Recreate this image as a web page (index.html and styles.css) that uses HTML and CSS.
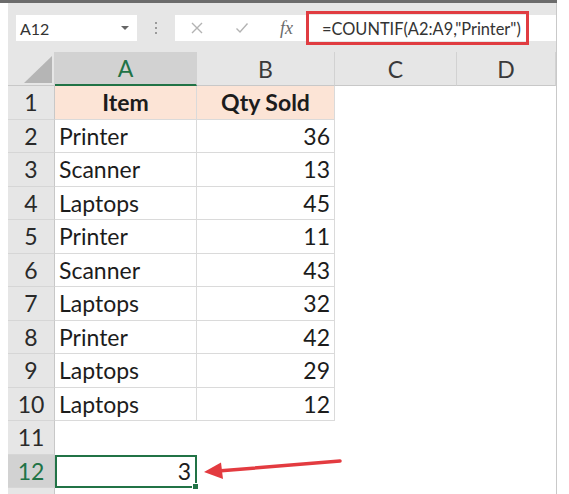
FILE: index.html
```html
<!DOCTYPE html>
<html lang="en">

<head>
    <meta charset="UTF-8">
    <meta name="viewport" content="width=device-width, initial-scale=1.0">
    <title>COUNTIF example</title>
    <link rel="stylesheet" href="styles.css">
</head>

<body>

    <div class="topbar"></div>

    <div class="window">
        <!-- name box + formula bar -->
        <div class="toolbar">
            <div class="namebox">
                <span>A12</span>
                <span class="caret"></span>
            </div>
            <div class="grip"><i></i><i></i><i></i></div>
            <div class="fbar">
                <svg class="btn" width="14" height="14" viewBox="0 0 14 14">
                    <path d="M2 2 L12 12 M12 2 L2 12" stroke="#b3b3b3" stroke-width="1.4" fill="none" />
                </svg>
                <svg class="btn check" width="14" height="14" viewBox="0 0 14 14">
                    <path d="M1.5 7.5 L5 11 L12.5 2.5" stroke="#b3b3b3" stroke-width="1.4" fill="none" />
                </svg>
                <span class="fx">fx</span>
                <span class="formula">=COUNTIF(A2:A9,"Printer")</span>
            </div>
        </div>

        <!-- worksheet -->
        <div class="sheet">
            <div class="ch corner"></div>
            <div class="ch on">A</div>
            <div class="ch">B</div>
            <div class="ch">C</div>
            <div class="ch">D</div>

            <div class="rh">1</div>
            <div class="c g h">Item</div>
            <div class="c g h">Qty Sold</div>
            <div class="c"></div>
            <div class="c"></div>

            <div class="rh">2</div>
            <div class="c g">Printer</div>
            <div class="c g n">36</div>
            <div class="c"></div>
            <div class="c"></div>

            <div class="rh">3</div>
            <div class="c g">Scanner</div>
            <div class="c g n">13</div>
            <div class="c"></div>
            <div class="c"></div>

            <div class="rh">4</div>
            <div class="c g">Laptops</div>
            <div class="c g n">45</div>
            <div class="c"></div>
            <div class="c"></div>

            <div class="rh">5</div>
            <div class="c g">Printer</div>
            <div class="c g n">11</div>
            <div class="c"></div>
            <div class="c"></div>

            <div class="rh">6</div>
            <div class="c g">Scanner</div>
            <div class="c g n">43</div>
            <div class="c"></div>
            <div class="c"></div>

            <div class="rh">7</div>
            <div class="c g">Laptops</div>
            <div class="c g n">32</div>
            <div class="c"></div>
            <div class="c"></div>

            <div class="rh">8</div>
            <div class="c g">Printer</div>
            <div class="c g n">42</div>
            <div class="c"></div>
            <div class="c"></div>

            <div class="rh">9</div>
            <div class="c g">Laptops</div>
            <div class="c g n">29</div>
            <div class="c"></div>
            <div class="c"></div>

            <div class="rh">10</div>
            <div class="c g">Laptops</div>
            <div class="c g n">12</div>
            <div class="c"></div>
            <div class="c"></div>

            <div class="rh">11</div>
            <div class="c"></div>
            <div class="c"></div>
            <div class="c"></div>
            <div class="c"></div>

            <div class="rh on">12</div>
            <div class="c n sel">3</div>
            <div class="c"></div>
            <div class="c"></div>
            <div class="c"></div>

            <!-- next row, only its top edge shows -->
            <div class="rh"></div>
            <div class="c"></div>
            <div class="c"></div>
            <div class="c"></div>
            <div class="c"></div>
        </div>
    </div>

    <!-- annotation arrow pointing at the result -->
    <svg class="arrow" width="569" height="494" viewBox="0 0 569 494">
        <line x1="340" y1="461" x2="218" y2="471" stroke="#e33b40" stroke-width="3.5" stroke-linecap="round" />
        <polygon points="204,472 221,462.5 223,479" fill="#e33b40" />
    </svg>

</body>

</html>
```

FILE: styles.css
```css
body {
    margin: 0;
    background-color: #fff;
    font-family: 'Lato', 'Liberation Sans', sans-serif;
    position: relative;
    width: 569px;
    height: 494px;
    overflow: hidden;
    color: #1c1c1c;
}

.topbar {
    width: 557px;
    height: 3px;
    background-color: #6c6c6c;
}

.window {
    margin-left: 8px;
    width: 548px;
    border-right: 1px solid #c9c9c9;
}

/* formula bar */

.toolbar {
    display: flex;
    height: 49px;
    padding-top: 12px;
    padding-left: 8px;
    box-sizing: border-box;
    background-color: #e6e6e6;
}

.namebox {
    width: 121px;
    height: 26px;
    background-color: #fff;
    display: flex;
    align-items: center;
    justify-content: space-between;
    padding: 0 8px 0 4px;
    box-sizing: border-box;
    font-size: 16px;
    color: #333;
}

.caret {
    border-left: 4px solid transparent;
    border-right: 4px solid transparent;
    border-top: 4px solid #666;
}

.grip {
    width: 38px;
    height: 26px;
    display: flex;
    flex-direction: column;
    align-items: center;
    justify-content: center;
    gap: 3px;
}

.grip i {
    width: 2px;
    height: 2px;
    background-color: #9a9a9a;
}

.fbar {
    flex: 1;
    height: 26px;
    background-color: #fff;
    display: flex;
    align-items: center;
}

.btn {
    margin-left: 15px;
}

.check {
    margin-left: 31px;
}

.fx {
    margin-left: 31px;
    font-family: 'Liberation Serif', serif;
    font-style: italic;
    font-size: 18px;
    color: #6a6a6a;
}

.formula {
    margin-left: 13px;
    width: 223px;
    height: 34px;
    box-sizing: border-box;
    border: 3px solid #e03c41;
    display: flex;
    align-items: center;
    padding-left: 13px;
    font-size: 16.4px;
    color: #333;
}

/* grid */

.sheet {
    display: grid;
    grid-template-columns: 47px 142px 138px 122px 99px;
    grid-template-rows: 34px repeat(13, 33.5px);
}

.ch {
    background-color: #e6e6e6;
    border-right: 1px solid #d2d2d2;
    border-bottom: 1px solid #c8c8c8;
    box-sizing: border-box;
    display: flex;
    align-items: center;
    justify-content: center;
    font-size: 23px;
    color: #3a3a3a;
}

.ch.on {
    background-color: #d2d2d2;
    color: #217346;
    border-bottom: 2px solid #217346;
}

.corner {
    position: relative;
}

.corner::after {
    content: '';
    position: absolute;
    right: 2px;
    bottom: 2px;
    width: 28px;
    height: 27px;
    background-color: #b5b5b5;
    clip-path: polygon(100% 0, 100% 100%, 0 100%);
}

.rh {
    background-color: #e6e6e6;
    border-right: 1px solid #c8c8c8;
    border-bottom: 1px solid #d6d6d6;
    box-sizing: border-box;
    display: flex;
    align-items: center;
    justify-content: center;
    font-size: 23px;
    color: #2a2a2a;
}

.rh.on {
    background-color: #d2d2d2;
    color: #217346;
}

.c {
    box-sizing: border-box;
    display: flex;
    align-items: center;
    padding: 0 4px;
    font-size: 23px;
}

.c.g {
    border-right: 1px solid #dadada;
    border-bottom: 1px solid #dadada;
}

.c.h {
    background-color: #fce4d6;
    font-weight: bold;
    justify-content: center;
}

.c.n {
    justify-content: flex-end;
}

.c.sel {
    border: 2px solid #217346;
    position: relative;
}

.c.sel::after {
    content: '';
    position: absolute;
    right: -4px;
    bottom: -4px;
    width: 5px;
    height: 5px;
    background-color: #217346;
    border: 1px solid #fff;
}

.arrow {
    position: absolute;
    left: 0;
    top: 0;
    pointer-events: none;
}
```
